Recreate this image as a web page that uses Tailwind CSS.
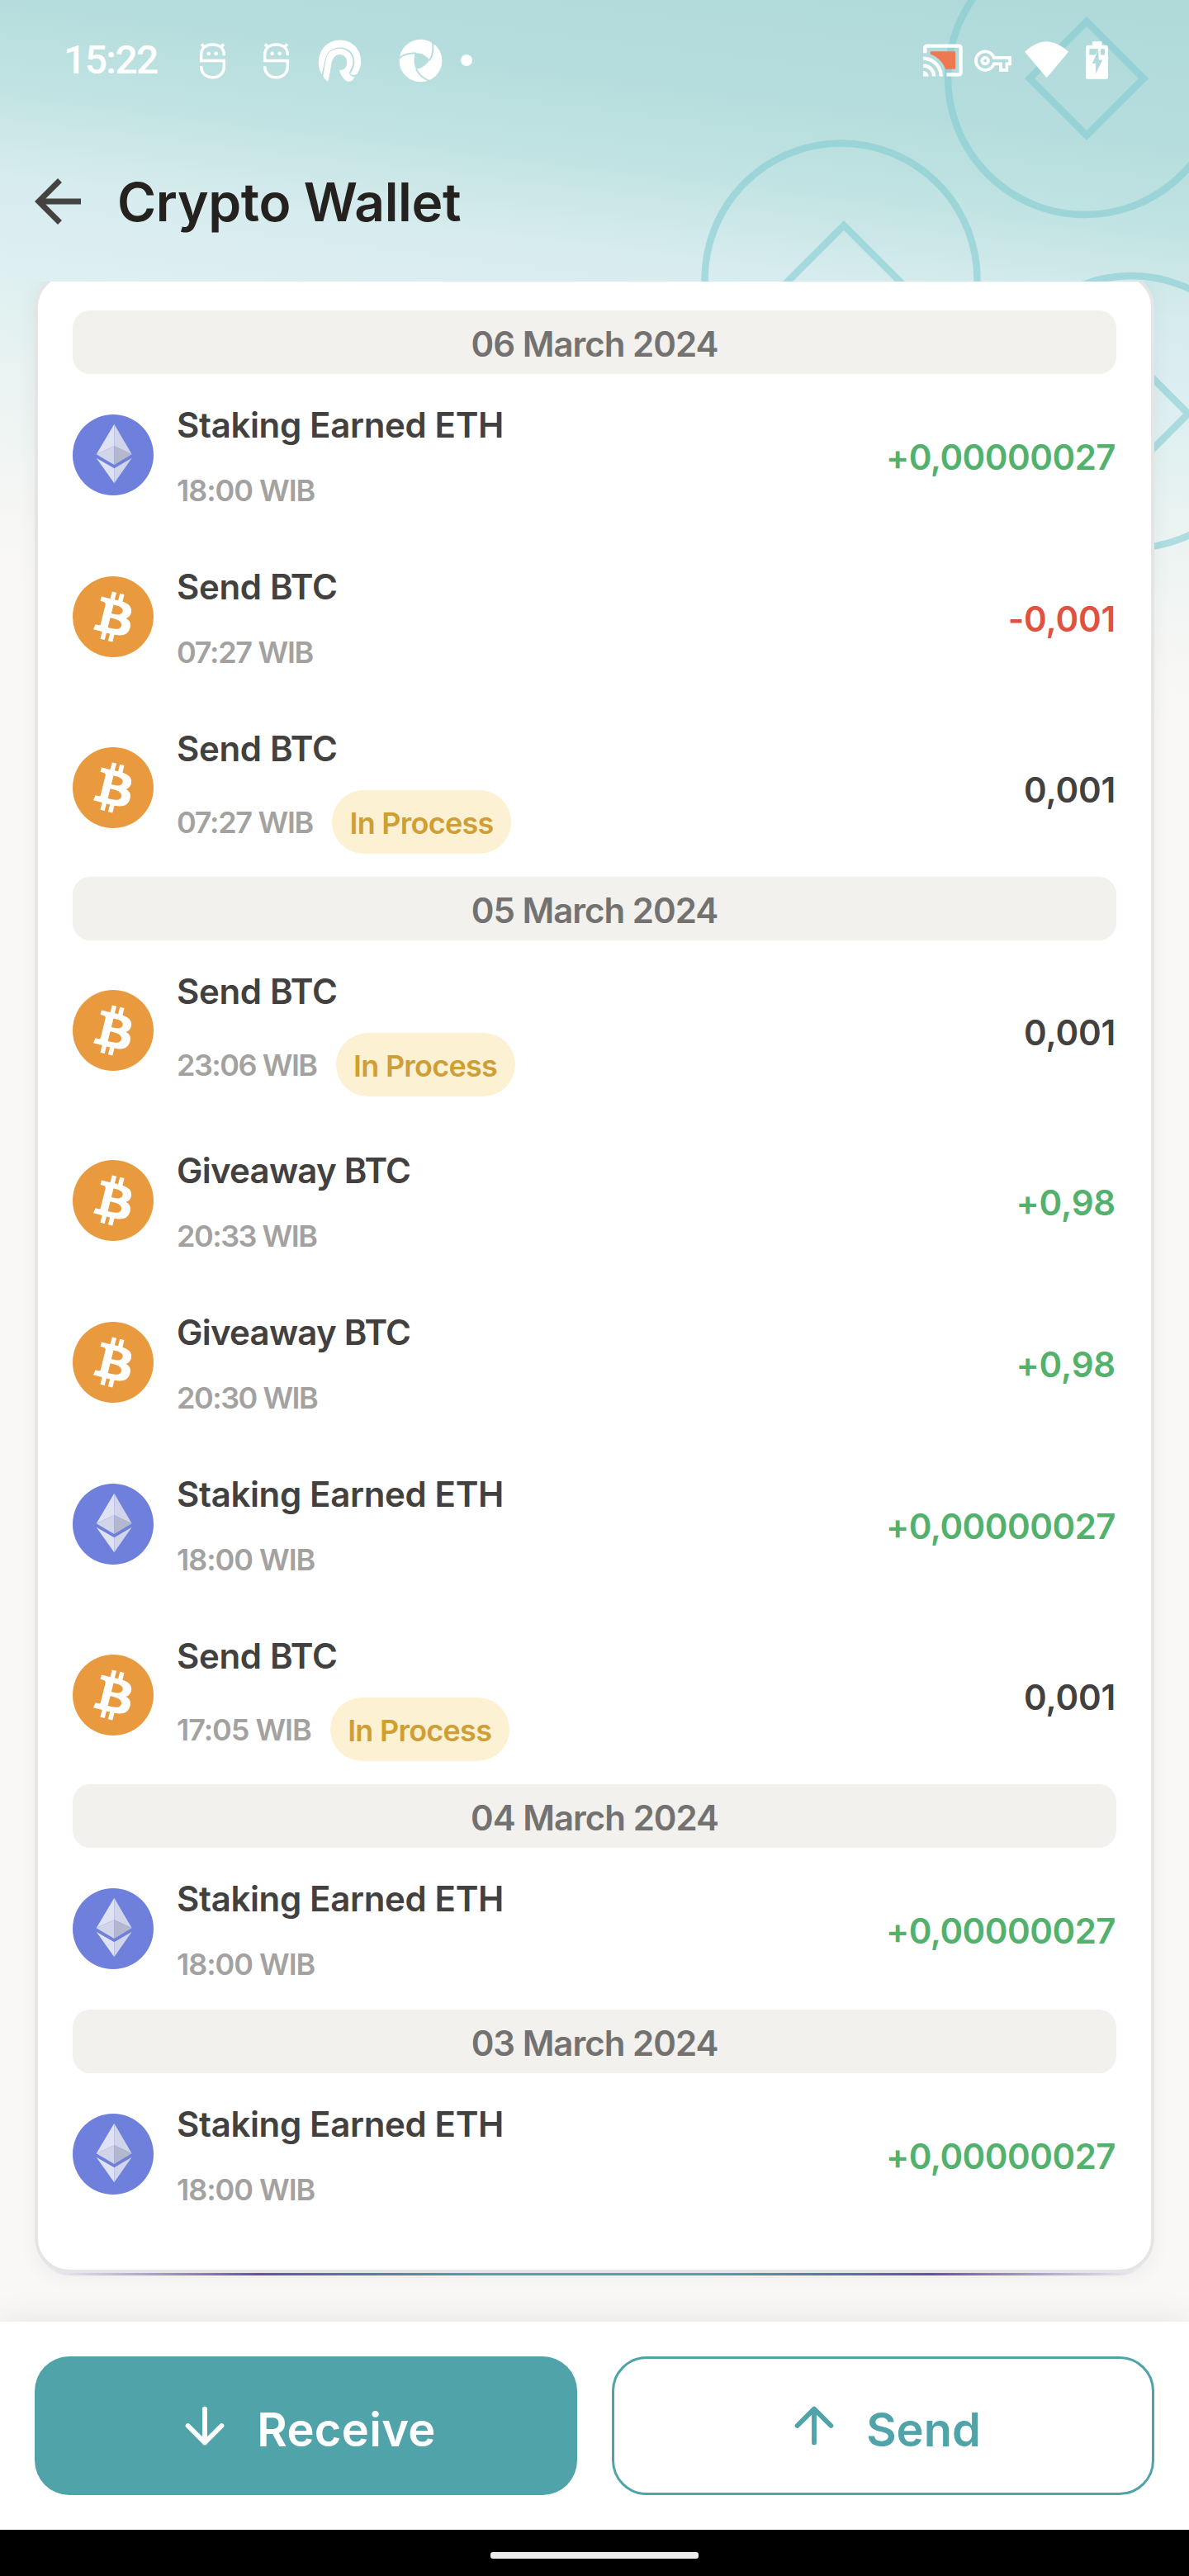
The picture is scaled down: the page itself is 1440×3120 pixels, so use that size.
<!DOCTYPE html>
<html lang="en">
<head>
<meta charset="utf-8">
<title>Crypto Wallet</title>
<script src="https://cdn.jsdelivr.net/npm/@tailwindcss/browser@4"></script>
</head>
<body class="bg-black">
<!-- shared icon symbols -->
<svg class="hidden">
  <symbol id="mascot" viewBox="60 60 105 140">
    <path d="M154 111V109C154 84 136 71.500 112.500 71.500S71 84 71 109V130H154V150C154 176 136 191 112.500 191S71 176 71 150" fill="none" stroke="#fff" stroke-width="10.500"/>
    <path d="M72 70l12 12M153 70l-12 12" stroke="#fff" stroke-width="11"/>
    <circle cx="98" cy="104" r="7" fill="#fff"/><circle cx="125" cy="104" r="7" fill="#fff"/>
  </symbol>
  <symbol id="eth" viewBox="84 96 294 294">
    <circle cx="231" cy="243" r="147" fill="#6f7fdc"/>
    <path fill="#dfe2f3" d="M235 131L170 241L235 211ZM170 254L235 292V346Z"/>
    <path fill="#d1d5e9" d="M235 131L299 241L235 211ZM170 241L235 211V279ZM299 254L235 292V346Z"/>
    <path fill="#b4b8cf" d="M235 211L299 241L235 279Z"/>
  </symbol>
  <symbol id="btc" viewBox="0 0 32 32">
    <circle cx="16" cy="16" r="16" fill="#e99a3f"/>
    <path fill="#fff" d="M23.189 14.02c.314-2.096-1.283-3.223-3.465-3.975l.708-2.84-1.728-.43-.69 2.765c-.454-.114-.92-.22-1.385-.326l.695-2.783L15.596 6l-.708 2.839c-.376-.086-.746-.17-1.104-.26l.002-.009-2.384-.595-.46 1.846s1.283.294 1.256.312c.7.175.826.638.805 1.006l-.806 3.235c.048.012.11.03.18.057l-.183-.045-1.13 4.532c-.086.212-.303.531-.793.41.018.025-1.256-.313-1.256-.313l-.858 1.978 2.25.561c.418.105.828.215 1.231.318l-.715 2.872 1.727.43.708-2.84c.472.127.93.245 1.378.357l-.706 2.828 1.728.43.715-2.866c2.948.558 5.164.333 6.097-2.333.752-2.146-.037-3.385-1.588-4.192 1.13-.26 1.98-1.003 2.207-2.538zm-3.95 5.538c-.533 2.147-4.148.986-5.32.695l.95-3.805c1.172.293 4.929.872 4.37 3.11zm.535-5.569c-.487 1.953-3.495.96-4.47.717l.86-3.45c.975.243 4.118.696 3.61 2.733z"/>
  </symbol>
</svg>

<div class="relative flex h-[3120px] w-[1440px] flex-col overflow-hidden bg-[#f9f8f6] font-[Inter,sans-serif]">
  <!-- decorative header backdrop -->
  <div class="absolute inset-x-0 top-0 h-[1000px] bg-[linear-gradient(187deg,#afd9d9_0px,#b6dddd_175px,#bfe2e2_265px,#cae6e6_320px,#d6ecee_385px,#dcedf1_455px,#e1f1f0_540px,#e9f3f2_625px,#f0f5f3_710px,#f7f7f5_800px,#f9f8f6_875px)]">
    <svg class="size-full" viewBox="0 0 1440 1000" fill="none" stroke="#7ecacf" stroke-opacity=".55" stroke-width="8.500">
      <circle cx="1314" cy="94" r="166"/><path d="M1316 26L1385 95L1316 164L1247 95Z"/>
      <circle cx="1018.500" cy="338.500" r="165"/><path d="M1022 273L1092 343L1022 413L952 343Z"/>
      <circle cx="1370" cy="499" r="165"/><path d="M1370 432L1439 501L1370 570L1301 501Z"/>
    </svg>
  </div>

  <!-- status bar -->
  <div class="relative flex h-[146px] items-center pl-[77px] pr-[98px]">
    <span class="w-[123px] font-[Roboto,sans-serif] text-[48px] font-medium tracking-[-1.6px] text-white">15:22</span>
    <svg class="ml-[40px] h-[47px] w-[35px]"><use href="#mascot"/></svg>
    <svg class="ml-[42px] h-[47px] w-[35px]"><use href="#mascot"/></svg>
    <svg class="ml-[33px] size-[53px]" viewBox="496 50 158 158" fill="#fff">
      <path d="M510 179C493 150 494 110 515 84C545 45 605 45 635 82C657 110 656 150 637 177C632 182 621 182 613 176C631 150 634 122 617 99C597 75 554 76 535 98C519 118 518 150 510 179Z"/>
      <path d="M533 204C525 200 518 194 515 184C521 160 520 135 529 112C540 88 570 79 596 90C621 102 629 130 617 155C612 165 607 172 611 178C615 184 622 187 629 188C624 198 618 204 610 204H602C588 196 578 180 574 164C582 162 592 163 598 150C606 130 598 108 575 107C556 107 549 122 545 140C540 165 538 185 533 204Z"/>
    </svg>
    <svg class="ml-[45px] size-[53px]" viewBox="790 49 160 160">
      <mask id="swirl"><rect x="780" y="40" width="180" height="180" fill="#fff"/>
        <path d="M850 101C872 100 890 110 902 127C890 146 874 158 853 160C844 140 844 118 850 101Z" fill="#000"/>
        <path d="M852 101C830 101 808 105 790 121M902 128C915 110 918 84 912 52M853 160C864 180 884 198 908 204" fill="none" stroke="#000" stroke-width="6"/>
      </mask>
      <circle cx="870" cy="129" r="78" fill="#fff" mask="url(#swirl)"/>
    </svg>
    <span class="ml-[22px] size-[14px] rounded-full bg-white"></span>
    <svg class="ml-auto size-[52px]" viewBox="0 0 24 24">
      <path fill="#fff" d="M1 18v3h3c0-1.660-1.340-3-3-3zm0-4v2c2.760 0 5 2.240 5 5h2c0-3.870-3.130-7-7-7zm0-4v2c4.970 0 9 4.030 9 9h2c0-6.080-4.930-11-11-11zm20-7H3c-1.100 0-2 .9-2 2v3h2V5h18v14h-7v2h7c1.100 0 2-.9 2-2V5c0-1.100-.9-2-2-2z"/>
      <path fill="#ee7950" d="M5 7v1.630c3.960 1.280 7.090 4.410 8.370 8.370H19V7H5z"/>
    </svg>
    <svg class="ml-[12px] size-[45px]" viewBox="0 0 24 24" fill="#fff"><path d="M22 19h-6v-4h-2.680c-1.140 2.420-3.600 4-6.320 4-3.860 0-7-3.140-7-7s3.140-7 7-7c2.720 0 5.170 1.580 6.320 4H24v6h-2v4zm-4-2h2v-4h2v-2H11.940l-.23-.67C11.010 8.340 9.110 7 7 7c-2.760 0-5 2.240-5 5s2.240 5 5 5c2.110 0 4.010-1.340 4.710-3.330l.23-.67H18v4zM7 15c-1.650 0-3-1.350-3-3s1.350-3 3-3 3 1.350 3 3-1.350 3-3 3zm0-4c-.55 0-1 .45-1 1s.45 1 1 1 1-.45 1-1-.45-1-1-1z"/></svg>
    <svg class="ml-[16px] h-[46px] w-[53px]" viewBox="423 60 159 138" fill="#fff"><path d="M503 193L423 98Q503 24 582 98Z"/></svg>
    <svg class="ml-[21px] h-[46px] w-[27px]" viewBox="645 61 81 137">
      <mask id="bolt"><rect x="640" y="55" width="90" height="150" fill="#fff"/>
        <path d="M658 88H714V110H658Z" fill="#000"/>
        <path d="M697 78L661 147H676V190L714 122H699V78Z" fill="#fff"/>
        <path d="M691 91L668 141H681V178L706 128H692Z" fill="#000"/>
      </mask>
      <path mask="url(#bolt)" fill="#fff" d="M669 61H703V75H718Q726 75 726 83V190Q726 198 718 198H653Q645 198 645 190V83Q645 75 653 75H669Z"/>
    </svg>
  </div>

  <!-- title bar -->
  <header class="relative flex h-[195px] shrink-0 items-center gap-[30px] pl-[28px]">
    <svg class="size-[84px]" viewBox="0 0 24 24" fill="#444341"><path d="M20 11H7.830l5.590-5.590L12 4l-8 8 8 8 1.410-1.410L7.830 13H20v-2z"/></svg>
    <h1 class="pt-[2px] text-[64px] font-semibold tracking-[-0.34px] text-[#24211e]">Crypto Wallet</h1>
  </header>

  <!-- transaction history -->
  <main class="relative h-[2471px] shrink-0 overflow-hidden px-[42px]">
    <div class="-mt-[11px] rounded-[42px] bg-[linear-gradient(90deg,#e8e4f400_0%,#674fa8_20%,#4fa3a9_40%,#4fa3a9_60%,#674fa8_80%,#e8e4f400_100%)] pb-[3px] shadow-[0_2px_26px_rgba(0,0,0,0.05)]">
      <div id="history" class="rounded-[42px] border-4 border-[#e5e5e5] bg-white p-[42px]"></div>
    </div>
  </main>

  <!-- actions -->
  <footer class="relative flex h-[252px] shrink-0 justify-between bg-white p-[42px] shadow-[0_0_40px_rgba(0,0,0,0.09)]">
    <button class="flex w-[657px] items-center justify-center gap-[28px] rounded-[42px] bg-[#4fa3a9] text-white">
      <svg class="size-[70px]" viewBox="0 0 24 24" fill="none" stroke="currentColor" stroke-width="2" stroke-linecap="round" stroke-linejoin="round"><path d="M12 5v14M19 12l-7 7-7-7"/></svg>
      <span class="pt-[9px] text-[56px] leading-[76px] font-semibold tracking-[0.3px]">Receive</span>
    </button>
    <button class="flex w-[657px] items-center justify-center gap-[28px] rounded-[42px] border-[3.500px] border-[#4fa3a9] text-[#4fa3a9]">
      <svg class="size-[70px]" viewBox="0 0 24 24" fill="none" stroke="currentColor" stroke-width="2" stroke-linecap="round" stroke-linejoin="round"><path d="M12 19V5M5 12l7-7 7 7"/></svg>
      <span class="pt-[9px] text-[56px] leading-[76px] font-semibold">Send</span>
    </button>
  </footer>

  <!-- gesture bar -->
  <div class="relative flex h-[56px] shrink-0 justify-center bg-black pt-[27px]">
    <div class="h-[8px] w-[252px] rounded-[3px] bg-[#ececec]"></div>
  </div>
</div>

<script>
const history_ = [
  ["06 March 2024", [["eth", "Staking Earned ETH", "18:00", "+0,00000027"], ["btc", "Send BTC", "07:27", "-0,001"], ["btc", "Send BTC", "07:27", "0,001", true]]],
  ["05 March 2024", [["btc", "Send BTC", "23:06", "0,001", true], ["btc", "Giveaway BTC", "20:33", "+0,98"], ["btc", "Giveaway BTC", "20:30", "+0,98"], ["eth", "Staking Earned ETH", "18:00", "+0,00000027"], ["btc", "Send BTC", "17:05", "0,001", true]]],
  ["04 March 2024", [["eth", "Staking Earned ETH", "18:00", "+0,00000027"]]],
  ["03 March 2024", [["eth", "Staking Earned ETH", "18:00", "+0,00000027"]]],
];
const tone = a => a[0] === "+" ? "text-[#53b16e]" : a[0] === "-" ? "text-[#df5241]" : "text-[#42413f]";
const timeTracking = t => t[0] === "2" ? "tracking-[-1.5px]" : t[0] === "0" ? "tracking-[-1.3px]" : "tracking-[-1.05px]";
const row = ([coin, name, time, amount, pending]) => `
  <div class="flex items-center ${pending ? "h-[217px]" : "h-[196px]"}">
    <svg class="size-[98px] shrink-0"><use href="#${coin}"/></svg>
    <div class="ml-[28px] flex flex-1 flex-col self-start pt-[29px]">
      <div class="text-[42px] leading-[66px] font-semibold ${name[0] === "G" ? "tracking-[-0.75px]" : "tracking-[-0.35px]"} text-[#42413f]">${name}</div>
      <div class="mt-[17px] flex items-center ${pending ? "h-[77px]" : "h-[56px]"}">
        <span class="pt-[2px] text-[36px] leading-[49px] font-semibold ${timeTracking(time)} text-[#a3a2a0]">${time} WIB</span>
        ${pending ? '<span class="ml-[23px] flex h-[77px] w-[217px] items-center justify-center rounded-full bg-[#fdf1d3] pt-[2px] text-[36px] font-semibold tracking-[-0.75px] text-[#cf9f35]">In Process</span>' : ""}
      </div>
    </div>
    <div class="mr-px pt-[5px] text-[42px] leading-[57px] font-semibold ${amount.length < 7 ? "tracking-[-0.2px]" : "tracking-[-0.5px]"} ${tone(amount)}">${amount}</div>
  </div>`;
document.getElementById("history").innerHTML = history_.map(([date, rows]) => `
  <h2 class="flex h-[77px] items-center justify-center rounded-[21px] bg-[#f2f1ed] pt-[4px] text-[42px] font-semibold tracking-[-1px] text-[#737270]">${date}</h2>
  ${rows.map(row).join("")}`).join("");
</script>
</body>
</html>
